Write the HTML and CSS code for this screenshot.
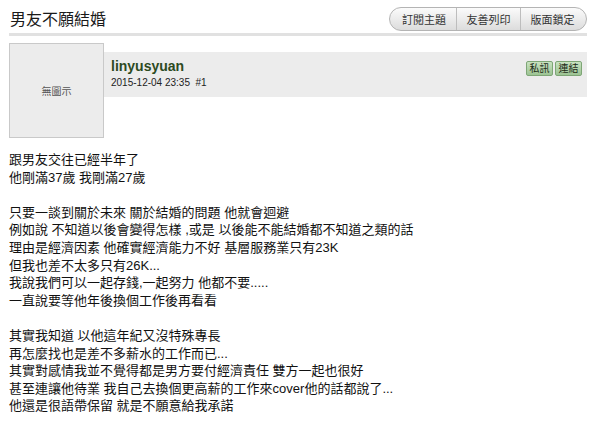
FILE: index.html
```html
<!DOCTYPE html>
<html lang="zh-TW">
<head>
  <meta charset="UTF-8" />
  <meta name="viewport" content="width=device-width, initial-scale=1" />
  <title>男友不願結婚</title>
  <link rel="stylesheet" href="styles.css">
</head>
<body>
  <div class="page">
    <div class="topic-head">
      <h1 class="topic-title">男友不願結婚</h1>
      <div class="topic-tools">
        <a href="#" class="tool">訂閱主題</a>
        <a href="#" class="tool">友善列印</a>
        <a href="#" class="tool">版面鎖定</a>
      </div>
    </div>

    <div class="post">
      <div class="post-top">
        <div class="avatar">無圖示</div>
        <div class="post-info">
          <div class="author">
            <div class="author-name">linyusyuan</div>
            <div class="post-date">2015-12-04 23:35&nbsp; #1</div>
          </div>
          <div class="author-actions">
            <a href="#" class="mini-btn">私訊</a>
            <a href="#" class="mini-btn">連結</a>
          </div>
        </div>
      </div>

      <!-- 內文 -->
      <div class="post-body">
        跟男友交往已經半年了<br>
        他剛滿37歲 我剛滿27歲<br>
        <br>
        只要一談到關於未來 關於結婚的問題 他就會迴避<br>
        例如說 不知道以後會變得怎樣 ,或是 以後能不能結婚都不知道之類的話<br>
        理由是經濟因素 他確實經濟能力不好 基層服務業只有23K<br>
        但我也差不太多只有26K...<br>
        我說我們可以一起存錢,一起努力 他都不要.....<br>
        一直說要等他年後換個工作後再看看<br>
        <br>
        其實我知道 以他這年紀又沒特殊專長<br>
        再怎麼找也是差不多薪水的工作而已...<br>
        其實對感情我並不覺得都是男方要付經濟責任 雙方一起也很好<br>
        甚至連讓他待業 我自己去換個更高薪的工作來cover他的話都說了...<br>
        他還是很語帶保留 就是不願意給我承諾
      </div>
    </div>
  </div>
</body>
</html>
```

FILE: styles.css
```css
body {
  margin: 0;
  background: #fff;
  font-family: "Liberation Sans", "Noto Sans CJK TC", sans-serif;
  color: #111;
}
.page {
  width: 578px;
  margin-left: 9px;
}
.topic-head {
  display: flex;
  justify-content: space-between;
  align-items: center;
  padding: 7px 0 2px;
  border-bottom: 3px solid #e1e1e1;
}
.topic-title {
  margin: 2px 0 0 1px;
  font-size: 16px;
  font-weight: normal;
  color: #1a1a1a;
  line-height: 20px;
}
.topic-tools {
  display: flex;
  height: 22px;
  border: 1px solid #b4b4b4;
  border-radius: 12px;
  overflow: hidden;
  background: linear-gradient(#fbfbfb, #dcdcdc);
}
.tool {
  width: 63px;
  display: flex;
  align-items: center;
  justify-content: center;
  font-size: 11px;
  color: #333;
  text-decoration: none;
  border-left: 1px solid #bdbdbd;
}
.tool:first-child {
  border-left: none;
  width: 64px;
  padding-left: 2px;
}
.tool:last-child {
  padding-right: 2px;
}
.post-top {
  display: flex;
  margin-top: 7px;
}
.avatar {
  width: 93px;
  height: 93px;
  border: 1px solid #c9c9c9;
  background: #ececec;
  display: flex;
  align-items: center;
  justify-content: center;
  font-size: 10px;
  color: #555;
}
.post-info {
  flex: 1;
  height: 45px;
  margin-top: 9px;
  background: #ececec;
  display: flex;
  justify-content: space-between;
  align-items: flex-start;
  padding: 0 5px 0 7px;
}
.author-name {
  margin-top: 6px;
  font-size: 14px;
  font-weight: bold;
  color: #2c4a1f;
  line-height: 16px;
}
.post-date {
  margin-top: 2px;
  font-size: 10px;
  color: #222;
  line-height: 14px;
}
.author-actions {
  display: flex;
  gap: 2px;
  margin-top: 9px;
}
.mini-btn {
  width: 25px;
  height: 13px;
  border: 1px solid #7ea676;
  border-radius: 2px;
  background: linear-gradient(#c8e2c0, #9cc393);
  font-size: 10px;
  line-height: 13px;
  text-align: center;
  color: #1d2b18;
  text-decoration: none;
}
.post-body {
  margin-top: 13px;
  font-size: 13px;
  line-height: 17.6px;
  color: #111;
}
```
